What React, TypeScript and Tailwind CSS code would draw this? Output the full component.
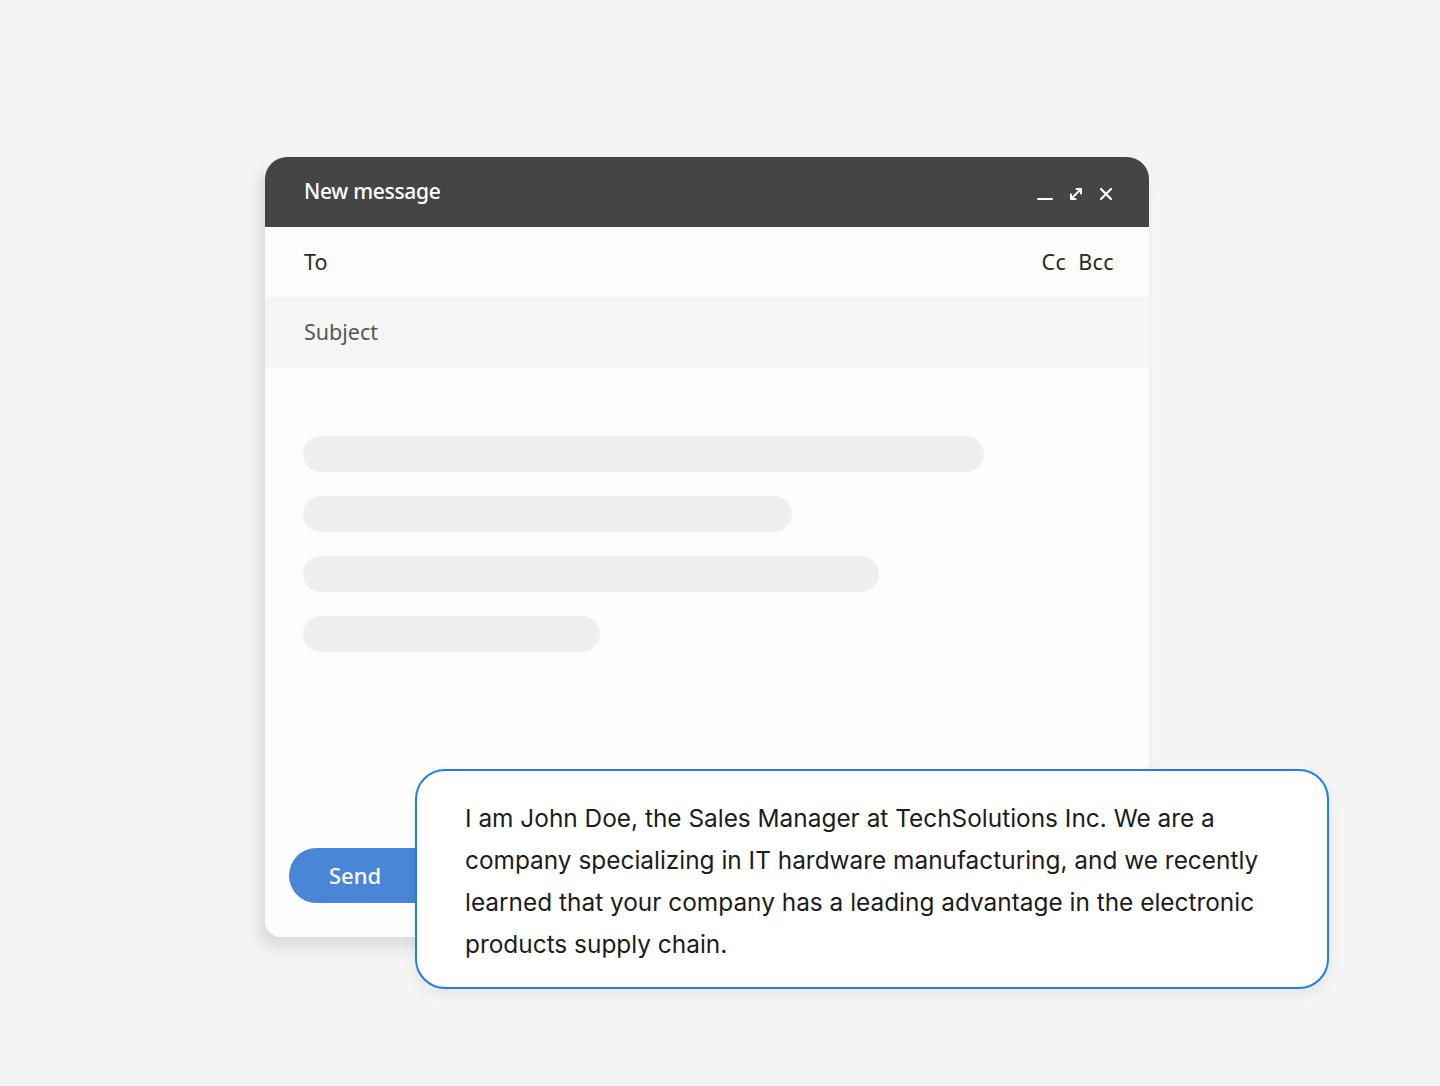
import React from 'react';

const bars = [681, 489, 576, 297];

const App: React.FC = () => {
  return (
    <div className="min-h-[1086px] w-full bg-[#f4f4f4] relative overflow-hidden" style={{ fontFamily: '"Noto Sans", Roboto, sans-serif' }}>
      <div className="pt-[157px] pl-[265px]">
        {/* compose window */}
        <div className="w-[884px] h-[780px] rounded-t-[22px] rounded-b-[16px] bg-white shadow-[-6px_10px_14px_rgba(0,0,0,0.10)] flex flex-col overflow-hidden">
          <div className="h-[70px] bg-[#454545] flex items-center justify-between pl-[39px] pr-[36px] shrink-0">
            <span className="text-white text-[21px] font-medium tracking-[-0.3px]">New message</span>
            <div className="flex items-center gap-[15px] text-white pt-[4px]">
              <svg width="16" height="16" viewBox="0 0 16 16">
                <path d="M1 13h14" stroke="white" strokeWidth="2" strokeLinecap="round" />
              </svg>
              <svg width="16" height="16" viewBox="0 0 16 16">
                <path d="M3 13L13 3M8.5 3H13v4.5M3 8.5V13h4.5" stroke="white" strokeWidth="2" fill="none" strokeLinecap="round" strokeLinejoin="round" />
              </svg>
              <svg width="14" height="14" viewBox="0 0 14 14">
                <path d="M2 2l10 10M12 2L2 12" stroke="white" strokeWidth="2.2" strokeLinecap="round" />
              </svg>
            </div>
          </div>
          <div className="h-[70px] bg-[#fdfdfd] flex items-center justify-between pl-[39px] pr-[35px] shrink-0">
            <span className="text-[#2a2a2a] text-[21.5px]">To</span>
            <span className="text-[#2a2a2a] text-[21.5px] tracking-[0.4px]">Cc&nbsp; Bcc</span>
          </div>
          <div className="h-[71px] bg-[#f5f5f5] flex items-center pl-[39px] shrink-0">
            <span className="text-[#555555] text-[21.5px]">Subject</span>
          </div>
          <div className="flex-1 bg-[#fdfdfd] pt-[68px] pl-[38px] flex flex-col gap-[24px]">
            {bars.map((w, i) => (
              <div key={i} className="h-[36px] rounded-full bg-[#efefef]" style={{ width: w }} />
            ))}
            <div className="mt-[172px] ml-[-14px] w-[160px] h-[55px] rounded-full bg-[#4a85d8] flex items-center pl-[40px]">
              <span className="text-white text-[22px] font-medium">Send</span>
            </div>
          </div>
        </div>
      </div>

      {/* callout */}
      <div className="absolute left-[415px] top-[769px] w-[914px] h-[220px] rounded-[30px] border-2 border-[#1f7cf2] bg-white shadow-[0_6px_14px_rgba(0,0,0,0.06)] pl-[48px] pr-[30px] pt-[26px]">
        <p className="text-[#1c1c1c] text-[24.4px] leading-[42px] whitespace-nowrap" style={{ fontFamily: 'Inter, "Noto Sans", sans-serif' }}>
          I am John Doe, the Sales Manager at TechSolutions Inc. We are a<br />
          company specializing in IT hardware manufacturing, and we recently<br />
          learned that your company has a leading advantage in the electronic<br />
          products supply chain.
        </p>
      </div>
    </div>
  );
};

export default App;
